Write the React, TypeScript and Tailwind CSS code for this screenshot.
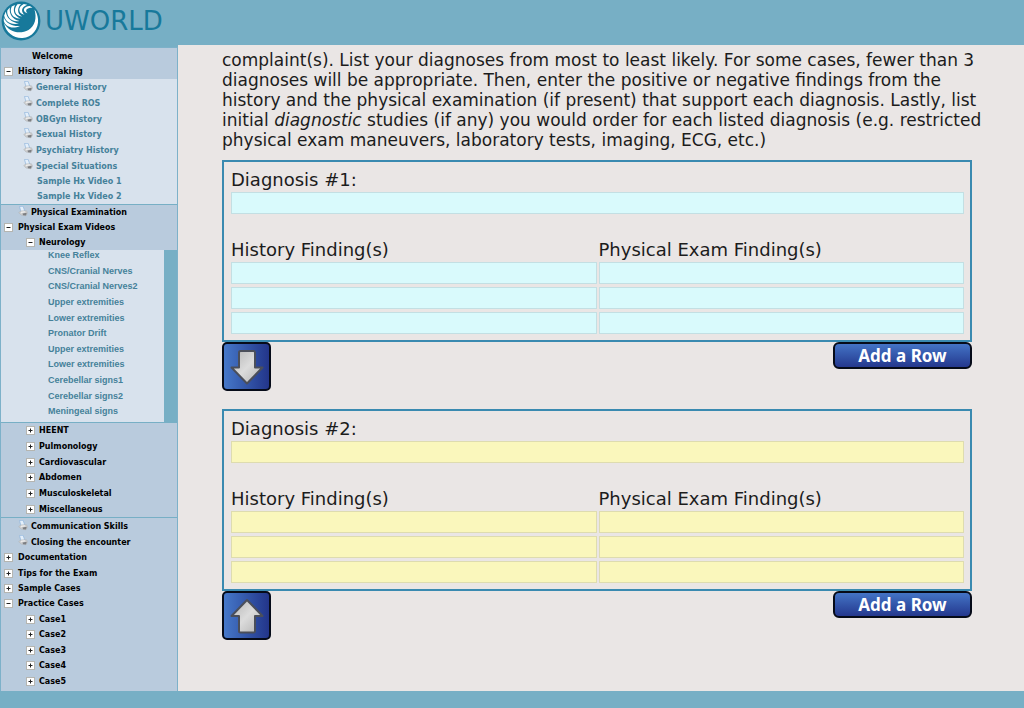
type Tone = 'cyan' | 'yellow';

const historyTopics = [
  'General History',
  'Complete ROS',
  'OBGyn History',
  'Sexual History',
  'Psychiatry History',
  'Special Situations',
];

const sampleVideos = ['Sample Hx Video 1', 'Sample Hx Video 2'];

const neurologyVideos = [
  'Knee Reflex',
  'CNS/Cranial Nerves',
  'CNS/Cranial Nerves2',
  'Upper extremities',
  'Lower extremities',
  'Pronator Drift',
  'Upper extremities',
  'Lower extremities',
  'Cerebellar signs1',
  'Cerebellar signs2',
  'Meningeal signs',
];

const examSystems = ['HEENT', 'Pulmonology', 'Cardiovascular', 'Abdomen', 'Musculoskeletal', 'Miscellaneous'];

const practiceCases = ['Case1', 'Case2', 'Case3', 'Case4', 'Case5'];

function Logo() {
  return (
    <svg viewBox="0 0 40 40" className="h-10 w-10" aria-hidden="true">
      <circle cx="20" cy="20" r="19.4" fill="#17799b" />
      {/* crescent under the swirl */}
      <path
        d="M3 22 C5 32 13 37.500 21.500 37 C31 36.500 38 28 37 18 C36.500 14 35.500 11 33.500 8.500 C36 17 34 25 27.500 29 C19 33.500 8 31.500 3 22 Z"
        fill="#fff"
      />
      {/* blades */}
      <g fill="#fff">
        <path d="M2.800 16.500 C5.500 22.500 11 25.500 19 25 C11 28.500 4.500 25.500 2.800 20 Z" />
        <path d="M4.800 10.500 C5.500 17 10.500 21.500 18 22.500 C9.500 24.500 4 20 3.200 14.500 Z" />
        <path d="M8.800 6.500 C8 13 11.500 18.500 18.500 20 C10 21.500 5.500 15 6.300 9.500 Z" />
        <path d="M14 4 C11.500 9.500 13 15 19.500 17.500 C11.500 18 8 11.500 10.700 5.600 Z" />
        <path d="M20 2.900 C16 7 16 12.500 21 15.500 C13.500 15 12 8 16.500 3.200 Z" />
        <path d="M26.200 3.800 C20.500 6 19.500 10.500 23.500 13.800 C16.500 12.500 17 5.500 22.800 3 Z" />
        <path d="M31.500 6.700 C26 6.500 23.500 9 26.500 12.300 C20.500 10.500 22.500 5 28.800 4.900 Z" />
      </g>
    </svg>
  );
}

function PrinterIcon() {
  return (
    <svg viewBox="0 0 10 11" className="mb-[3px] h-[11px] w-[10px] shrink-0" aria-hidden="true">
      <path d="M1.500 .5 L5 .2 L6.800 5 L3 6 Z" fill="#e4effa" stroke="#8fb4dc" strokeWidth=".7" />
      <path d="M.8 6.500 L3 5 L8.500 4.800 L9.500 7 L8 9.800 L3 9 Z" fill="#d2d2d2" stroke="#b0b3b7" strokeWidth=".6" />
      <path d="M4.500 7.500 L8.800 6.800 L8 9.600 L5 9.300 Z" fill="#7d7f83" />
      <path d="M3 6.300 L6.800 5.800" stroke="#fff" strokeWidth=".8" />
    </svg>
  );
}

function Toggle({ open = false, label }: { open?: boolean; label: string }) {
  return (
    <button
      type="button"
      aria-expanded={open}
      aria-label={label}
      className="flex h-[9px] w-[9px] shrink-0 items-center justify-center border border-[#b5b5b0] bg-white"
    >
      <svg viewBox="0 0 5 5" className="h-[5px] w-[5px]" aria-hidden="true">
        <path d={open ? 'M.5 2.500 H4.500' : 'M.5 2.500 H4.500 M2.500 .5 V4.500'} stroke="#222" strokeWidth="1" />
      </svg>
    </button>
  );
}

function Branch({ label, open, nested }: { label: string; open?: boolean; nested?: boolean }) {
  return (
    <li className={`flex items-center ${nested ? 'gap-1 pl-[25px]' : 'gap-[5px] pl-[3px]'}`}>
      <Toggle open={open} label={label} />
      <a href="#">{label}</a>
    </li>
  );
}

function PrintLink({ label, nested }: { label: string; nested?: boolean }) {
  return (
    <li className={`flex items-center gap-[3px] ${nested ? 'pl-[22px]' : 'pl-[17px]'}`}>
      <PrinterIcon />
      <a href="#">{label}</a>
    </li>
  );
}

function Sidebar() {
  return (
    <nav className="w-[178px] shrink-0 bg-[#77afc5] pt-[2px] font-['DejaVu_Sans',sans-serif] text-[8px] leading-[15px] font-bold text-black">
      <div className="h-full border border-b-0 border-[#7db1c9] bg-[#b9cbdd]">
        <ul className="pt-px">
          <li className="pl-[31px]">
            <a href="#">Welcome</a>
          </li>
          <Branch label="History Taking" open />
        </ul>

        <div className="border-b border-[#77afc5] bg-[#d8e2ed] pt-px text-[#45819a]">
          <ul className="grid h-[94px] auto-rows-fr">
            {historyTopics.map((topic) => (
              <PrintLink key={topic} label={topic} nested />
            ))}
          </ul>
          <ul>
            {sampleVideos.map((video) => (
              <li key={video} className="pl-9">
                <a href="#">{video}</a>
              </li>
            ))}
          </ul>
        </div>

        <ul>
          <PrintLink label="Physical Examination" />
          <Branch label="Physical Exam Videos" open />
          <Branch label="Neurology" open nested />
        </ul>

        <div className="border-b border-[#77afc5] bg-[#77afc5]">
          <ul className="mr-[13px] grid h-[172px] auto-rows-fr bg-[#d8e2ed] pl-[47px] font-['Liberation_Sans',sans-serif] text-[9px] leading-[10px] text-[#45819a]">
            {neurologyVideos.map((video, i) => (
              <li key={i}>
                <a href="#">{video}</a>
              </li>
            ))}
          </ul>
        </div>

        <ul className="grid h-[95px] auto-rows-fr border-b border-[#77afc5]">
          {examSystems.map((system) => (
            <Branch key={system} label={system} nested />
          ))}
        </ul>

        <ul className="grid h-[171px] auto-rows-fr pt-px">
          <PrintLink label="Communication Skills" />
          <PrintLink label="Closing the encounter" />
          <Branch label="Documentation" />
          <Branch label="Tips for the Exam" />
          <Branch label="Sample Cases" />
          <Branch label="Practice Cases" open />
          {practiceCases.map((item) => (
            <Branch key={item} label={item} nested />
          ))}
        </ul>
      </div>
    </nav>
  );
}

function Field({ id, label, tone }: { id?: string; label?: string; tone: Tone }) {
  return (
    <input
      id={id}
      type="text"
      aria-label={label}
      className={`block h-[22px] w-full border px-1 text-sm ${
        tone === 'cyan' ? 'border-[#c3dfe3] bg-[#d9fafc]' : 'border-[#dedcaf] bg-[#faf7bc]'
      }`}
    />
  );
}

function FindingColumn({ title, number, tone }: { title: string; number: number; tone: Tone }) {
  return (
    <div>
      <h3 className="mb-[2px] leading-5">{title}</h3>
      <div className="flex flex-col gap-[3px]">
        {[1, 2, 3].map((row) => (
          <Field key={row} label={`${title} ${row}, diagnosis ${number}`} tone={tone} />
        ))}
      </div>
    </div>
  );
}

function ArrowIcon({ up }: { up?: boolean }) {
  return (
    <svg viewBox="0 0 36 36" className="h-9 w-9" aria-hidden="true">
      <defs>
        <linearGradient id={up ? 'metalUp' : 'metalDown'} x1="0" y1="0" x2="1" y2="1">
          <stop offset="0" stopColor="#b4b4b4" />
          <stop offset=".5" stopColor="#dcdcdc" />
          <stop offset="1" stopColor="#b0b0b0" />
        </linearGradient>
      </defs>
      <path
        d={
          up
            ? 'M18 2 L33.500 18 H26 V33 Q26 34.500 24.500 34.500 H11.500 Q10 34.500 10 33 V18 H2.500 Z'
            : 'M18 34.500 L33.500 18.500 H26 V3.500 Q26 2 24.500 2 H11.500 Q10 2 10 3.500 V18.500 H2.500 Z'
        }
        fill={up ? 'url(#metalUp)' : 'url(#metalDown)'}
        stroke="#4b4f5a"
        strokeWidth="2"
        strokeLinejoin="round"
      />
    </svg>
  );
}

function DiagnosisBlock({ number, tone, up }: { number: number; tone: Tone; up?: boolean }) {
  const id = `diagnosis-${number}`;
  return (
    <section className="mb-[18px]">
      <div className="border-2 border-[#3a8ab0] pt-2 pr-[6px] pb-[6px] pl-[7px] text-[18px]">
        <label htmlFor={id} className="mb-[2px] block leading-5">
          Diagnosis #{number}:
        </label>
        <Field id={id} tone={tone} />
        <div className="mt-[26px] grid grid-cols-2 gap-[2px]">
          <FindingColumn title="History Finding(s)" number={number} tone={tone} />
          <FindingColumn title="Physical Exam Finding(s)" number={number} tone={tone} />
        </div>
      </div>
      <div className="flex items-start justify-between">
        <button
          type="button"
          aria-label={up ? 'Move up' : 'Move down'}
          className="flex h-[49px] w-[49px] items-center justify-center rounded-[5px] border-2 border-[#060b18] bg-linear-to-r from-[#4678c9] to-[#23358a]"
        >
          <ArrowIcon up={up} />
        </button>
        <button
          type="button"
          className="h-[27px] w-[139px] rounded-[6px] border-2 border-[#060b18] bg-linear-to-b from-[#4474c6] to-[#25388e] text-center font-['Noto_Sans',sans-serif] text-[17px] leading-5 font-bold text-white"
        >
          Add a Row
        </button>
      </div>
    </section>
  );
}

export default function App() {
  return (
    <div className="flex min-h-screen flex-col bg-[#eae6e5] font-['DejaVu_Sans',sans-serif] text-[#1c1c1c]">
      <header className="flex h-[45px] items-center gap-1 bg-[#77afc5] pb-[3px] pl-px">
        <Logo />
        <span className="text-[26px] leading-8 text-[#17799b]">UWORLD</span>
      </header>

      <div className="flex flex-1">
        <Sidebar />
        <main className="min-w-0 flex-1 pt-[5px] pr-[52px] pl-11">
          <p className="-mr-3 mb-[10px] text-[17px] leading-5">
            complaint(s). List your diagnoses from most to least likely. For some cases, fewer than 3 diagnoses will be
            appropriate. Then, enter the positive or negative findings from the history and the physical examination (if
            present) that support each diagnosis. Lastly, list initial <em>diagnostic</em> studies (if any) you would
            order for each listed diagnosis (e.g. restricted physical exam maneuvers, laboratory tests, imaging, ECG,
            etc.)
          </p>
          <DiagnosisBlock number={1} tone="cyan" />
          <DiagnosisBlock number={2} tone="yellow" up />
        </main>
      </div>

      <footer className="h-[17px] bg-[#77afc5]" />
    </div>
  );
}
